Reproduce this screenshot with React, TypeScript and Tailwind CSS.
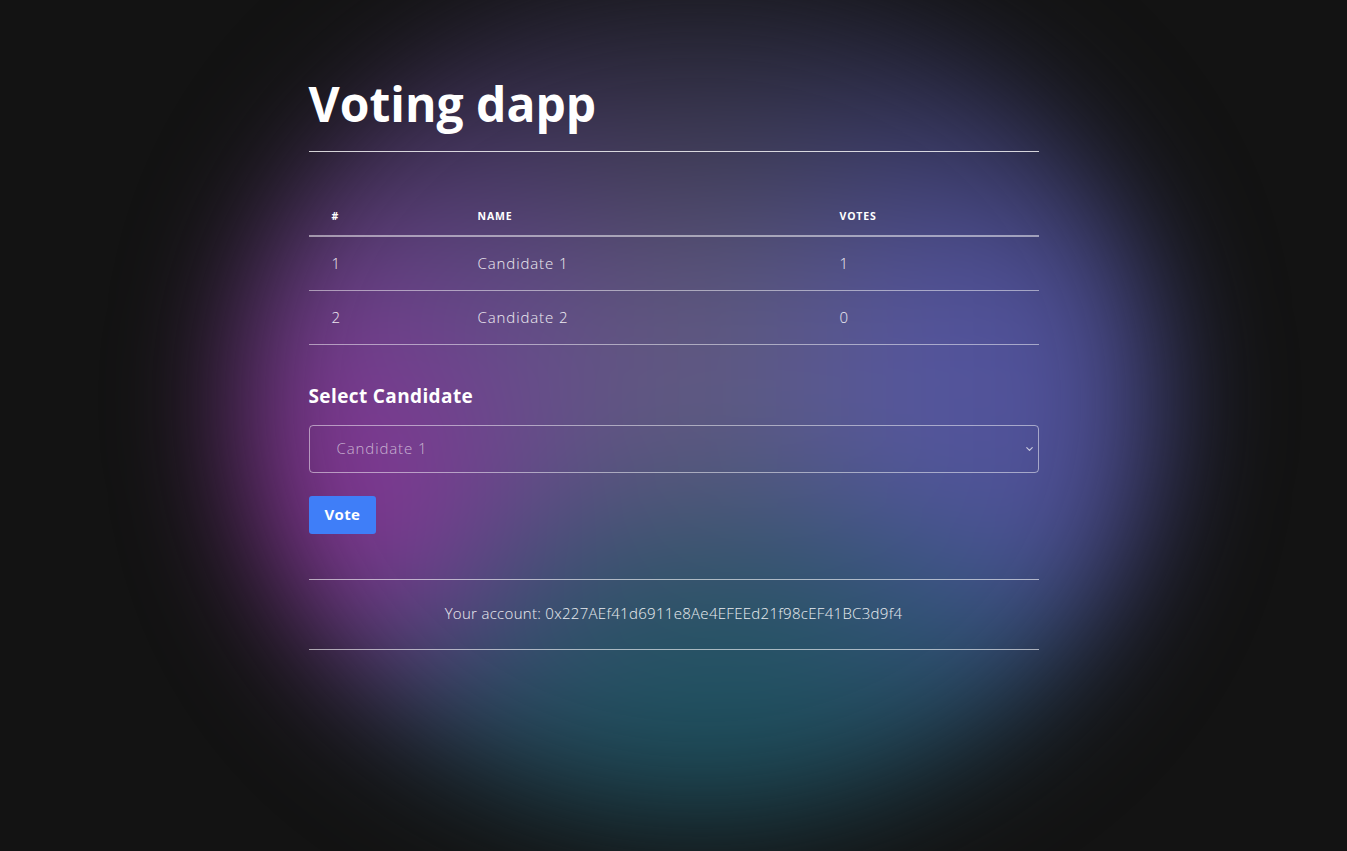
import { ChevronDown } from "lucide-react";

interface Candidate {
  id: number;
  name: string;
  votes: number;
}

const candidates: Candidate[] = [
  { id: 1, name: "Candidate 1", votes: 1 },
  { id: 2, name: "Candidate 2", votes: 0 },
];

const account = "0x227AEf41d6911e8Ae4EFEEd21f98cEF41BC3d9f4";

export default function App() {
  return (
    <div className="relative min-h-screen w-full overflow-hidden bg-[#131313] font-['Open_Sans',sans-serif] text-white">
      {/* glow behind the card */}
      <div className="pointer-events-none absolute left-[240px] top-[-20px] h-[840px] w-[920px] rounded-[50%] bg-[image:linear-gradient(to_bottom,rgba(26,26,36,0.95)_0%,rgba(30,30,44,0.5)_20%,rgba(30,30,44,0)_38%),radial-gradient(circle_at_10%_62%,rgba(135,50,148,0.95),rgba(135,50,148,0)_24%),radial-gradient(ellipse_50%_30%_at_52%_86%,rgba(28,82,96,1),rgba(28,82,96,0.6)_60%,rgba(28,82,96,0)),linear-gradient(to_bottom,rgba(20,30,36,0)_78%,rgba(20,34,40,0.95)_100%),linear-gradient(to_right,#6e3a86_0%,#654d8c_28%,#5f5a7e_50%,#5556a0_75%,#484a8c_100%)] blur-[60px]" />

      <div className="relative mx-auto w-[730px] pt-[80px]">
        <h1 className="border-b border-white/80 pb-[23px] text-5xl font-bold leading-none">
          Voting dapp
        </h1>

        <table className="mt-10 w-full table-fixed border-collapse">
          <thead>
            <tr className="border-b-2 border-white/50">
              <th className="h-[44px] w-[146px] pl-[23px] pt-[7px] text-left text-[10.5px] font-bold uppercase tracking-[0.08em]">#</th>
              <th className="h-[44px] w-[362px] pl-[23px] pt-[7px] text-left text-[10.5px] font-bold uppercase tracking-[0.08em]">Name</th>
              <th className="h-[44px] pl-[23px] pt-[7px] text-left text-[10.5px] font-bold uppercase tracking-[0.08em]">Votes</th>
            </tr>
          </thead>
          <tbody>
            {candidates.map((c) => (
              <tr key={c.id} className="border-b border-white/50">
                <td className="h-[54px] pl-[23px] text-[15px] font-light tracking-[0.06em] text-white/90">{c.id}</td>
                <td className="h-[54px] pl-[23px] text-[15px] font-light tracking-[0.06em] text-white/90">{c.name}</td>
                <td className="h-[54px] pl-[23px] text-[15px] font-light tracking-[0.06em] text-white/90">{c.votes}</td>
              </tr>
            ))}
          </tbody>
        </table>

        <form className="mt-10" onSubmit={(e) => e.preventDefault()}>
          <label className="block text-[19px] font-bold leading-[22px] tracking-[0.02em]">Select Candidate</label>
          <div className="relative mt-[18px]">
            <select className="h-[48px] w-full appearance-none rounded border border-white/50 bg-transparent pl-[27px] text-[15px] font-light tracking-[0.06em] text-white/60 outline-none">
              {candidates.map((c) => (
                <option key={c.id} value={c.id} className="text-black">
                  {c.name}
                </option>
              ))}
            </select>
            <ChevronDown className="pointer-events-none absolute right-[4px] top-1/2 -translate-y-1/2 text-white/70" size={11} strokeWidth={2.5} />
          </div>
          <button type="submit" className="mt-[23px] h-[38px] rounded-[3px] bg-[#3f7ef8] px-[16px] text-[15px] font-bold tracking-[0.02em] text-white">
            Vote
          </button>
        </form>

        <div className="mt-[45px] border-y border-white/60 pb-[25px] pt-[22px] text-center text-[15px] font-light leading-[22px] tracking-[0.02em] text-white/90">
          Your account: {account}
        </div>
      </div>
    </div>
  );
}
